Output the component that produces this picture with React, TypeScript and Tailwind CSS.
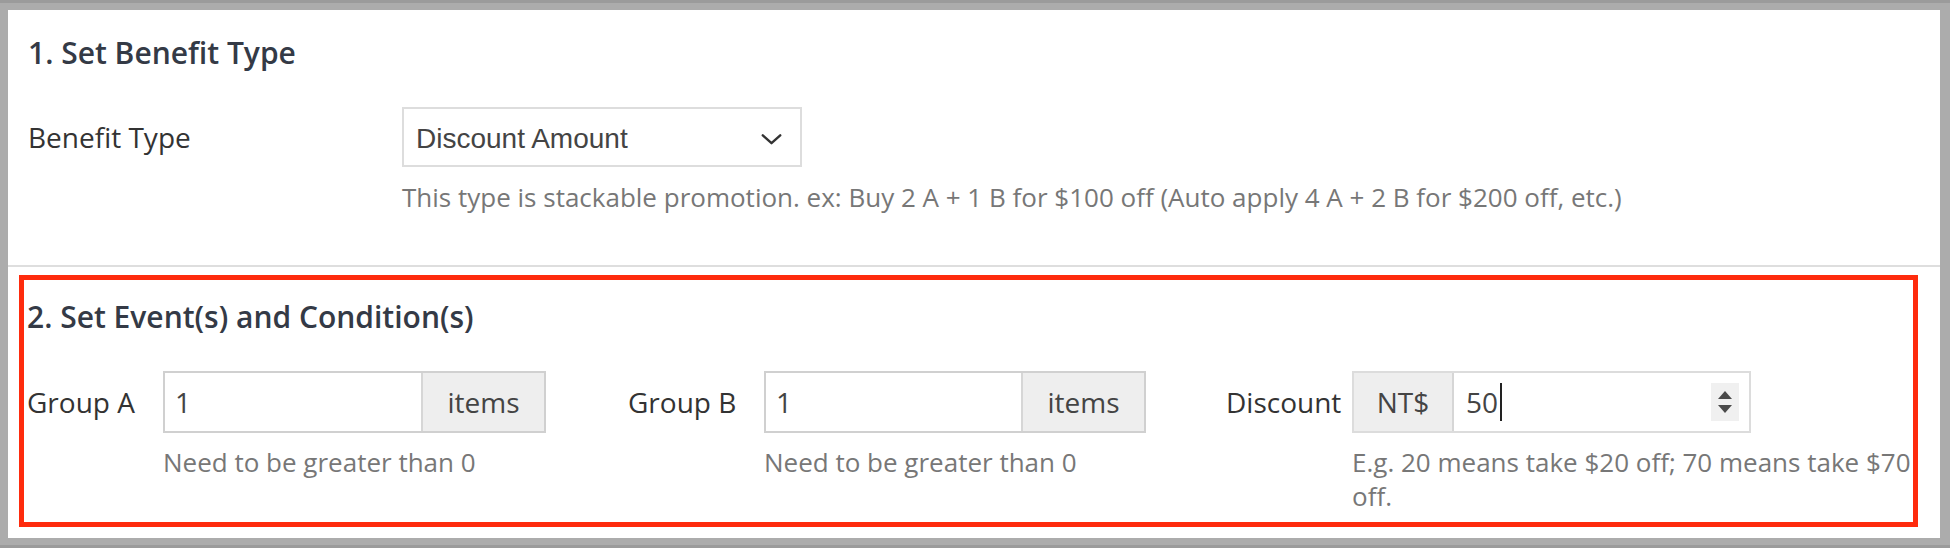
export default function App() {
  const sans = "font-['Open_Sans','Noto_Sans',sans-serif]";

  return (
    <div className={`${sans} h-[548px] w-[1950px] bg-[#acacac] border-t-[3px] border-b-[3px] border-[#9b9b9b] pt-[7px] pb-[7px] pl-[8px] pr-[10px]`}>
      <div className="flex h-[528px] flex-col bg-white">
        {/* Section 1 */}
        <div className="h-[257px] shrink-0 border-b-2 border-[#dedede] pl-[20px] pt-[23px]">
          <h2 className="text-[30px] font-semibold leading-[40px] text-[#343a46]">1. Set Benefit Type</h2>
          <div className="mt-[34px] flex">
            <div className="flex h-[60px] w-[374px] shrink-0 items-center text-[28px] text-[#333]">Benefit Type</div>
            <div className="flex flex-col">
              <div className="flex h-[60px] w-[400px] items-center justify-between border-2 border-[#dddddd] pl-[12px] pr-[18px] pt-[4px] font-['Liberation_Sans',Arial,sans-serif] text-[28px] text-[#444]">
                <span>Discount Amount</span>
                <svg width="21" height="11" viewBox="0 0 22 12" fill="none">
                  <path d="M1.5 1.5 L11 10 L20.5 1.5" stroke="#333" strokeWidth="2.6" strokeLinecap="round" strokeLinejoin="round" />
                </svg>
              </div>
              <p className="mt-[13px] whitespace-nowrap text-[26px] leading-[34px] text-[#777]">
                This type is stackable promotion. ex: Buy 2 A + 1 B for $100 off (Auto apply 4 A + 2 B for $200 off, etc.)
              </p>
            </div>
          </div>
        </div>

        {/* Section 2 */}
        <div className="flex-1 pb-[11px] pl-[11px] pr-[22px] pt-[8px]">
          <div className="h-full border-[5px] border-[#fe2b0d] pl-[3px] pt-[17px]">
            <h2 className="text-[30px] font-semibold leading-[40px] text-[#343a46]">2. Set Event(s) and Condition(s)</h2>
            <div className="mt-[34px] grid grid-cols-[601px_598px_1fr]">
              <GroupField label="Group A" width="w-[383px]" />
              <GroupField label="Group B" width="w-[382px]" />

              <div className="flex">
                <div className="flex h-[62px] w-[126px] shrink-0 items-center whitespace-nowrap text-[28px] text-[#333]">Discount</div>
                <div className="flex flex-col">
                  <div className="flex h-[62px] w-[399px] border-2 border-[#dcdcdc]">
                    <div className="flex w-[100px] shrink-0 items-center justify-center border-r-2 border-[#d6d6d6] bg-[#eeeeee] text-[28px] text-[#444]">NT$</div>
                    <div className="flex flex-1 items-center pl-[12px] pr-[10px] text-[28px] text-[#444]">
                      <span>50</span>
                      <span className="ml-[2px] h-[38px] w-[2px] bg-[#222]" />
                      <div className="ml-auto flex h-[38px] w-[28px] flex-col items-center justify-center gap-[6px] bg-[#f0f0f0]">
                        <svg width="14" height="8" viewBox="0 0 14 8"><path d="M7 0 L14 8 L0 8 Z" fill="#4a4a4a" /></svg>
                        <svg width="14" height="8" viewBox="0 0 14 8"><path d="M0 0 L14 0 L7 8 Z" fill="#4a4a4a" /></svg>
                      </div>
                    </div>
                  </div>
                  <p className="mt-[12px] whitespace-nowrap text-[26px] leading-[34px] text-[#777]">
                    E.g. 20 means take $20 off; 70 means take $70
                    <br />
                    off.
                  </p>
                </div>
              </div>
            </div>
          </div>
        </div>
      </div>
    </div>
  );
}

function GroupField({ label, width }: { label: string; width: string }) {
  return (
    <div className="flex">
      <div className="flex h-[62px] w-[136px] shrink-0 items-center text-[28px] text-[#333]">{label}</div>
      <div className="flex flex-col">
        <div className={`flex h-[62px] ${width} border-2 border-[#d0d0d0]`}>
          <div className="flex flex-1 items-center pl-[10px] text-[28px] text-[#444]">1</div>
          <div className="flex w-[123px] shrink-0 items-center justify-center border-l-2 border-[#d6d6d6] bg-[#eeeeee] text-[28px] text-[#444]">items</div>
        </div>
        <p className="mt-[12px] whitespace-nowrap text-[26px] leading-[34px] text-[#777]">Need to be greater than 0</p>
      </div>
    </div>
  );
}
